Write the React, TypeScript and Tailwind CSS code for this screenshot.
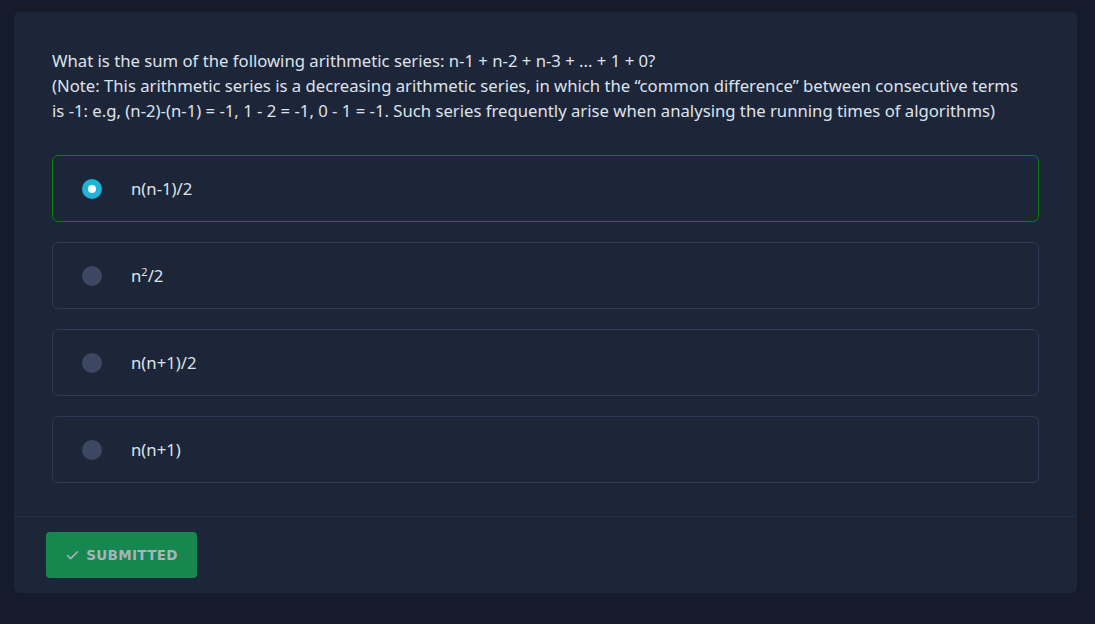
import { Check } from "lucide-react";

const options = [
  { id: "a", label: <>n(n-1)/2</>, selected: true },
  { id: "b", label: <>n<sup className="text-[11px]">2</sup>/2</>, selected: false },
  { id: "c", label: <>n(n+1)/2</>, selected: false },
  { id: "d", label: <>n(n+1)</>, selected: false },
];

export default function App() {
  return (
    <div className="min-h-screen w-full bg-[#151b2a] pl-[14px] pr-[18px] pt-[12px] font-['Noto_Sans',sans-serif]">
      <div className="rounded-md bg-[#1d2639]">
        <div className="px-[38px] pt-[36px] pb-[33px]">
          <p className="pr-[8px] text-[16.7px] leading-[25px] text-[#dde2ea]">
            What is the sum of the following arithmetic series: n-1 + n-2 + n-3 + ... + 1 + 0?
            <br />
            (Note: This arithmetic series is a decreasing arithmetic series, in which the “common difference” between consecutive terms is -1: e.g, (n-2)-(n-1) = -1, 1 - 2 = -1, 0 - 1 = -1. Such series frequently arise when analysing the running times of algorithms)
          </p>
          <div className="mt-[32px] flex flex-col gap-[20px]">
            {options.map((o) => (
              <div
                key={o.id}
                className={`flex h-[67px] items-center rounded-md border pl-[29px] ${
                  o.selected ? "border-[#0b7d0b]" : "border-[#2d3a58]"
                }`}
              >
                {o.selected ? (
                  <span className="flex h-5 w-5 items-center justify-center rounded-full bg-[#1eb4d8]">
                    <span className="h-2 w-2 rounded-full bg-white" />
                  </span>
                ) : (
                  <span className="h-5 w-5 rounded-full bg-[#3c4862]" />
                )}
                <span className="ml-[29px] text-[16.7px] text-[#dde2ea]">{o.label}</span>
              </div>
            ))}
          </div>
        </div>
        <div className="border-t border-[#24304a] px-[32px] pt-[15px] pb-[15px]">
          <button className="flex h-[46px] w-[151px] items-center justify-center gap-1.5 rounded bg-[#15874f] font-['DejaVu_Sans',sans-serif] text-[13.5px] font-bold tracking-wide text-[#a9b3bf]">
            <Check size={15} strokeWidth={2.5} />
            SUBMITTED
          </button>
        </div>
      </div>
    </div>
  );
}
